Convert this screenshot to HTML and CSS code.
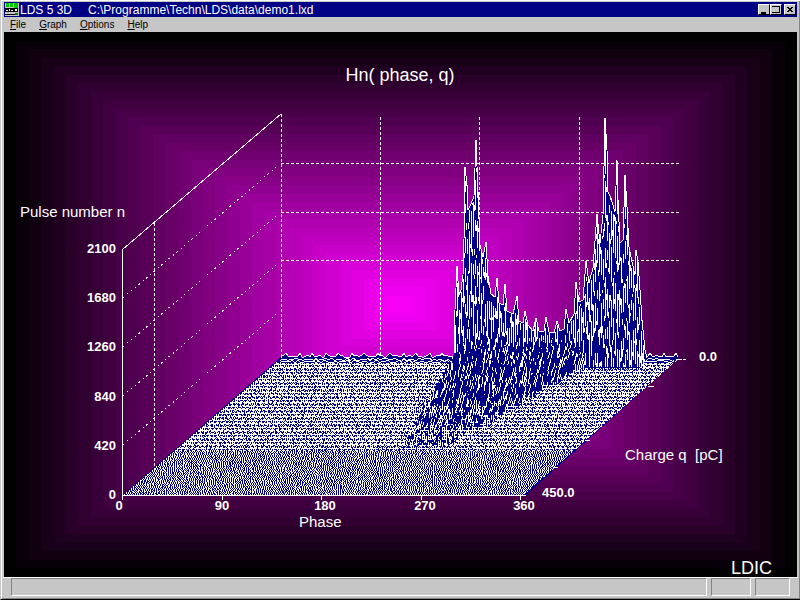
FILE: index.html
```html
<!DOCTYPE html>
<html lang="en">
<head>
  <meta charset="UTF-8">
  <title>LDS 5 3D</title>
  <link rel="stylesheet" href="styles.css">
</head>
<body>

  <div class="window">
    <header class="titlebar">
      <svg class="app-icon" viewBox="0 0 14 13" shape-rendering="crispEdges">
        <rect width="14" height="13" fill="#c6c6c6"/>
        <path d="M1 0h3v4h-3zM5 0h3v4h-3zM9 0h4v5h-4z" fill="#00c800"/>
        <path d="M0 5h13v4h-13zM0 11h11v1h-11z" fill="#000"/>
        <path d="M1 7h2v1h-2zM4 6h1v2h-1zM6 7h2v1h-2zM10 6h2v2h-2z" fill="#fff"/>
        <path d="M10 10h3v2h-3z" fill="#008000"/>
      </svg>
      <h1 class="caption"><span>LDS 5 3D</span><span>C:\Programme\Techn\LDS\data\demo1.lxd</span></h1>
      <div class="controls">
        <button aria-label="Minimize"><svg viewBox="0 0 10 9"><path d="M2 7h5v2h-5z"/></svg></button>
        <button aria-label="Maximize"><svg viewBox="0 0 10 9"><path d="M1 1h8v7h-8v-1h7v-5h-7z"/></svg></button>
        <button class="close" aria-label="Close"><svg viewBox="0 0 10 9"><path d="M2 2h2v1h2v-1h2v1h-1v1h-1v1h1v1h1v1h-2v-1h-2v1h-2v-1h1v-1h1v-1h-1v-1h-1z"/></svg></button>
      </div>
    </header>

    <nav class="menu">
      <button><u>F</u>ile</button>
      <button><u>G</u>raph</button>
      <button><u>O</u>ptions</button>
      <button><u>H</u>elp</button>
    </nav>

    <main class="plot">
      <svg class="chart" viewBox="4 32 793 545" role="img" aria-label="Hn( phase, q)">
        <g id="backdrop"></g>
        <g class="grid">
          <path d="M281.5 114V358M380.5 117V358M479.5 117V358M579.5 117V358M154.5 223V467"/>
          <path d="M281 163.5H679M281 212.5H679M281 260.5H679"/>
          <path class="slanted" d="M123 298L281 163M123 347L281 212M123 396L281 261M123 445L281 310"/>
        </g>
        <g id="surface"></g>
        <g class="axes">
          <path d="M281 114L122.500 249.500V495.500H526"/>
          <path d="M122.500 496V500M222.500 496V500M321.500 496V500M421.500 496V500M520.500 496V500"/>
          <path d="M678 359.500H682M683 359.500H686M648 386.500H654M585 440.500H590M553 467.500H558"/>
        </g>
        <g class="name">
          <text class="big" x="400" y="81" text-anchor="middle">Hn( phase, q)</text>
          <text x="20" y="217">Pulse number n</text>
          <text x="299" y="527">Phase</text>
          <text x="625" y="460">Charge q  [pC]</text>
          <text class="big" x="731" y="574">LDIC</text>
        </g>
        <g class="ticks end">
          <text x="116" y="253">2100</text>
          <text x="116" y="302">1680</text>
          <text x="116" y="351">1260</text>
          <text x="116" y="401">840</text>
          <text x="116" y="450">420</text>
          <text x="116" y="499">0</text>
        </g>
        <g class="ticks middle">
          <text x="119" y="510">0</text>
          <text x="222" y="510">90</text>
          <text x="325" y="510">180</text>
          <text x="425" y="510">270</text>
          <text x="524" y="510">360</text>
        </g>
        <g class="ticks">
          <text x="542" y="497">450.0</text>
          <text x="699" y="361">0.0</text>
        </g>
      </svg>
    </main>

    <footer class="status">
      <div class="panel"></div>
      <div class="panel"></div>
      <div class="panel"></div>
    </footer>
  </div>

  <script>
    const NS = 'http://www.w3.org/2000/svg';
    const backdrop = document.getElementById('backdrop');
    const surface = document.getElementById('surface');

    function add(parent, tag, attrs) {
      const el = document.createElementNS(NS, tag);
      for (const key in attrs) el.setAttribute(key, attrs[key]);
      parent.appendChild(el);
    }

    // fixed seed, so the noise is the same on every load
    let seed = 7;
    function rnd() {
      seed = (seed * 16807) % 2147483647;
      return seed / 2147483647;
    }

    // magenta glow in 32 steps
    for (let i = 0; i < 32; i++) {
      const dx = Math.round(i * 12.4);
      const dy = Math.round(i * 8.5);
      const c = Math.min(255, i * 8);
      add(backdrop, 'rect', {
        x: 4 + dx, y: 32 + dy, width: 793 - 2 * dx, height: 545 - 2 * dy,
        fill: 'rgb(' + c + ',0,' + c + ')'
      });
    }

    // outline of the pulses at q = 0
    const peaks = [
      [454,357],[455,310],[457,266],[459,295],[461,290],[463,275],[464,240],[465,167],[467,185],[468,210],
      [471,204],[474,196],[476,140],[478,192],[480,245],[483,257],[486,242],[488,276],[491,294],[495,297],
      [497,278],[499,303],[503,305],[505,284],[507,311],[513,314],[517,296],[519,321],[523,323],[525,311],
      [528,325],[533,331],[536,318],[539,331],[544,331],[546,317],[549,332],[554,333],[557,321],[560,331],
      [564,329],[566,309],[569,323],[574,314],[576,282],[579,302],[583,300],[586,261],[589,283],[593,268],
      [597,214],[600,243],[603,215],[605,118],[607,150],[608,192],[611,198],[615,212],[617,160],[618,200],
      [620,243],[623,240],[625,175],[627,207],[629,247],[632,262],[635,275],[636,250],[638,262],[640,290],
      [642,320],[645,350],[647,358]
    ];

    function topAt(x) {
      for (let i = 1; i < peaks.length; i++) {
        const [x0, y0] = peaks[i - 1];
        const [x1, y1] = peaks[i];
        if (x <= x1) return y0 + (y1 - y0) * (x - x0) / (x1 - x0);
      }
      return 358;
    }

    // floor, woven from single-pixel rows
    add(surface, 'path', { d: 'M123 495L281 357H680L526 495Z', fill: '#000084' });
    let floor = '';
    for (let y = 359; y < 495; y++) {
      const left = Math.round(281 - (y - 358) * 158 / 137);
      const right = Math.round(679 - (y - 358) * 156 / 137);
      const front = y > 450;
      const band = y % 7;
      for (let x = left + (y % 2); x < right;) {
        let on = 1;
        let off = 1;
        if (!front && (band === 0 || band === 3)) on = rnd() < 0.8 ? 12 : 3;
        else if (!front && (band === 1 || band === 5)) off = rnd() < 0.5 ? 3 : 1;
        else if (!front) { on = rnd() < 0.5 ? 3 : 1; off = rnd() < 0.4 ? 2 : 1; }
        else { on = rnd() < 0.85 ? 1 : 2; off = rnd() < 0.85 ? 1 : 2; }
        const w = Math.min(on, right - x);
        floor += 'M' + x + ' ' + y + 'h' + w + 'v1h-' + w + 'z';
        x += on + off;
      }
    }
    add(surface, 'path', { d: floor, fill: '#fff' });

    // low noise along the back edge
    let noise = 'M281 358';
    for (let x = 282; x < 680; x += 2) {
      noise += 'L' + x + ' ' + (x % 13 < 2 ? 353 : 355 + Math.round(rnd() * 2));
    }
    add(surface, 'path', { d: noise + 'L674 363H278Z', fill: '#000084' });
    add(surface, 'path', { d: noise, class: 'trace' });
    for (let r = 0; r < 2; r++) {
      let d = '';
      for (let x = 280; x < 676; x += 2) d += (d ? 'L' : 'M') + x + ' ' + (358 + r * 2 + Math.round(rnd() * 3));
      add(surface, 'path', { d: d, class: 'trace' });
    }

    // main pulses
    const outline = 'M' + peaks.map(p => p.join(' ')).join('L');
    add(surface, 'path', { d: outline + 'L640 368H448Z', fill: '#000084' });
    let stripes = '';
    for (let x = 455; x < 645; x++) {
      let y = Math.round(topAt(x));
      const odd = x % 2;
      y += Math.round(rnd() * (odd ? 20 : 40));
      while (y < 366) {
        const len = Math.round(odd ? 8 + rnd() * 34 : 2 + rnd() * 6);
        stripes += 'M' + x + ' ' + y + 'h1V' + Math.min(367, y + len) + 'h-1z';
        y += len + Math.round(odd ? 6 + rnd() * 24 : 20 + rnd() * 36);
      }
    }
    add(surface, 'path', { d: stripes, fill: '#fff' });
    add(surface, 'path', { d: outline, class: 'trace' });

    // slopes that run out towards higher charge
    for (let y = 356; y < 450; y += 3) {
      const t = (y - 356) / 94;
      const left = 452 - 58 * t;
      const right = t < 0.12 ? 584 : 608 - 160 * t;
      let fill = '';
      let lines = '';
      for (let x = Math.round(left); x < right; x += 2) {
        const edge = Math.min(1, (x - left) / 10, (right - x) / 10);
        const h = Math.round((3 + 15 * (1 - t)) * edge * (0.2 + 0.8 * rnd()));
        if (h < 2) continue;
        fill += 'M' + x + ' ' + (y - h) + 'h2v' + (h - 1) + 'h-2z';
        // short streak leaning to the right
        if (rnd() < 0.5) lines += 'M' + x + ' ' + y + 'L' + (x + Math.ceil(h / 4)) + ' ' + (y - h);
      }
      add(surface, 'path', { d: fill, fill: '#000084' });
      add(surface, 'path', { d: lines, class: 'trace' });
    }
  </script>

</body>
</html>
```
FILE: styles.css
```css
* {
  box-sizing: border-box;
}

body {
  margin: 0;
  font-family: "Liberation Sans", Arial, sans-serif;
  background: #c6c6c6;
  color: #000;
}

.window {
  display: flex;
  flex-direction: column;
  height: 100vh;
  padding: 2px 2px 1px 2px;
  background: #c6c6c6;
  border-left: 1px solid #c6c6c6;
  border-bottom: 1px solid #000;
  box-shadow: inset 1px 1px #fff, inset -1px -1px #848484;
}

.titlebar {
  display: flex;
  align-items: center;
  height: 15px;
  margin: 0 1px;
  padding: 0 1px;
  background: #000084;
  color: #fff;
}

.app-icon {
  width: 14px;
  height: 13px;
}

.caption {
  display: flex;
  flex: 1;
  gap: 16px;
  margin: 0 0 0 1px;
  font-size: 12px;
  line-height: 14px;
  font-weight: normal;
  white-space: nowrap;
}

.controls {
  display: flex;
}

.controls button {
  width: 12px;
  height: 11px;
  padding: 0;
  border: 1px solid;
  border-color: #fff #000 #000 #fff;
  background: #c6c6c6;
}

.controls .close {
  margin-left: 2px;
}

.controls svg {
  display: block;
  width: 10px;
  height: 9px;
  shape-rendering: crispEdges;
}

.menu {
  display: flex;
  gap: 13px;
  height: 15px;
  padding-left: 7px;
}

.menu button {
  padding: 0;
  border: 0;
  background: none;
  font-family: inherit;
  font-size: 10px;
  line-height: 15px;
  color: #000;
}

.plot {
  flex: 1;
  min-height: 0;
  margin: 0 1px;
  background: #000;
}

.chart {
  display: block;
  width: 100%;
  height: 100%;
}

#backdrop,
#surface,
.grid,
.axes {
  shape-rendering: crispEdges;
}

.grid path,
.axes path,
.trace {
  fill: none;
  stroke: #fff;
  stroke-width: 1px;
}

.grid path {
  stroke-dasharray: 3 2;
}

.grid .slanted {
  stroke-dasharray: 2 4 1 3;
}

.name text {
  font-size: 15px;
  fill: #fff;
  white-space: pre;
}

.name .big {
  font-size: 18px;
}

.ticks text {
  font-size: 13px;
  font-weight: bold;
  fill: #fff;
}

.end {
  text-anchor: end;
}

.middle {
  text-anchor: middle;
}

.status {
  display: flex;
  gap: 4px;
  height: 21px;
  padding: 0 8px 2px 8px;
  border-top: 1px solid #fff;
}

.panel {
  width: 40px;
  border: 1px solid;
  border-color: #848484 #fff #fff #848484;
}

.panel:first-child {
  flex: 1;
}

.panel:last-child {
  width: 35px;
}
```
